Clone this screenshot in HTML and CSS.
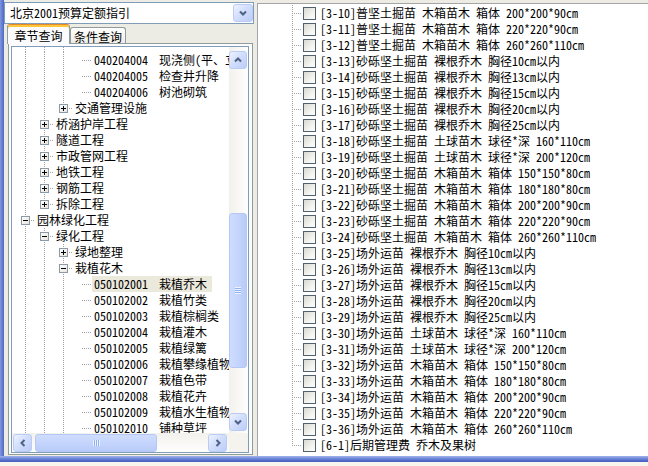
FILE: index.html
```html
<!DOCTYPE html>
<html lang="zh-CN">
<head>
<meta charset="utf-8">
<title>定额指引</title>
<link rel="stylesheet" href="styles.css">
</head>
<body>
<div class="screen">
  <div class="main">
    <div class="edge"></div>
    <div class="left">
      <div class="combo">
        <span class="combo-text">北京2001预算定额指引</span>
        <span class="sbtn combo-btn"><svg width="8" height="6" viewBox="0 0 8 6"><path d="M1 1.5l3 3 3-3" fill="none" stroke="#4d6185" stroke-width="2"/></svg></span>
      </div>
      <div class="tabs">
        <span class="tab active">章节查询</span>
        <span class="tab">条件查询</span>
      </div>
      <div class="tabpage">
        <div class="tree">
          <div class="tree-body">
            <div class="row part"><span class="c v"></span><span class="c v"></span><span class="c v"></span></div>
            <div class="row"><span class="c v"></span><span class="c v"></span><span class="c v"></span><span class="c h"></span><span class="lb"><span class="cd">040204004</span>现浇侧(平、立)石</span></div>
            <div class="row"><span class="c v"></span><span class="c v"></span><span class="c v"></span><span class="c h"></span><span class="lb"><span class="cd">040204005</span>检查井升降</span></div>
            <div class="row"><span class="c v"></span><span class="c v"></span><span class="c v"></span><span class="c h"></span><span class="lb"><span class="cd">040204006</span>树池砌筑</span></div>
            <div class="row"><span class="c v"></span><span class="c v"></span><span class="c e"><i class="bx p"></i></span><span class="lb">交通管理设施</span></div>
            <div class="row"><span class="c v"></span><span class="c t"><i class="bx p"></i></span><span class="lb">桥涵护岸工程</span></div>
            <div class="row"><span class="c v"></span><span class="c t"><i class="bx p"></i></span><span class="lb">隧道工程</span></div>
            <div class="row"><span class="c v"></span><span class="c t"><i class="bx p"></i></span><span class="lb">市政管网工程</span></div>
            <div class="row"><span class="c v"></span><span class="c t"><i class="bx p"></i></span><span class="lb">地铁工程</span></div>
            <div class="row"><span class="c v"></span><span class="c t"><i class="bx p"></i></span><span class="lb">钢筋工程</span></div>
            <div class="row"><span class="c v"></span><span class="c e"><i class="bx p"></i></span><span class="lb">拆除工程</span></div>
            <div class="row"><span class="c t"><i class="bx m"></i></span><span class="lb">园林绿化工程</span></div>
            <div class="row"><span class="c v"></span><span class="c t"><i class="bx m"></i></span><span class="lb">绿化工程</span></div>
            <div class="row"><span class="c v"></span><span class="c v"></span><span class="c t"><i class="bx p"></i></span><span class="lb">绿地整理</span></div>
            <div class="row"><span class="c v"></span><span class="c v"></span><span class="c t"><i class="bx m"></i></span><span class="lb">栽植花木</span></div>
            <div class="row"><span class="c v"></span><span class="c v"></span><span class="c v"></span><span class="c h"></span><span class="lb sel"><span class="cd">050102001</span>栽植乔木</span></div>
            <div class="row"><span class="c v"></span><span class="c v"></span><span class="c v"></span><span class="c h"></span><span class="lb"><span class="cd">050102002</span>栽植竹类</span></div>
            <div class="row"><span class="c v"></span><span class="c v"></span><span class="c v"></span><span class="c h"></span><span class="lb"><span class="cd">050102003</span>栽植棕榈类</span></div>
            <div class="row"><span class="c v"></span><span class="c v"></span><span class="c v"></span><span class="c h"></span><span class="lb"><span class="cd">050102004</span>栽植灌木</span></div>
            <div class="row"><span class="c v"></span><span class="c v"></span><span class="c v"></span><span class="c h"></span><span class="lb"><span class="cd">050102005</span>栽植绿篱</span></div>
            <div class="row"><span class="c v"></span><span class="c v"></span><span class="c v"></span><span class="c h"></span><span class="lb"><span class="cd">050102006</span>栽植攀缘植物</span></div>
            <div class="row"><span class="c v"></span><span class="c v"></span><span class="c v"></span><span class="c h"></span><span class="lb"><span class="cd">050102007</span>栽植色带</span></div>
            <div class="row"><span class="c v"></span><span class="c v"></span><span class="c v"></span><span class="c h"></span><span class="lb"><span class="cd">050102008</span>栽植花卉</span></div>
            <div class="row"><span class="c v"></span><span class="c v"></span><span class="c v"></span><span class="c h"></span><span class="lb"><span class="cd">050102009</span>栽植水生植物</span></div>
            <div class="row"><span class="c v"></span><span class="c v"></span><span class="c v"></span><span class="c h"></span><span class="lb"><span class="cd">050102010</span>铺种草坪</span></div>
            <div class="row"><span class="c v"></span><span class="c v"></span><span class="c v"></span><span class="c h"></span><span class="lb"><span class="cd">050102011</span>喷播植草</span></div>
          </div>
          <div class="vscroll">
            <span class="sbtn vbtn"><svg width="8" height="6" viewBox="0 0 8 6"><path d="M1 4.5l3-3 3 3" fill="none" stroke="#4d6185" stroke-width="2"/></svg></span>
            <div class="vtrack"><span class="thumb vthumb"><i class="vgrip"></i></span></div>
            <span class="sbtn vbtn"><svg width="8" height="6" viewBox="0 0 8 6"><path d="M1 1.5l3 3 3-3" fill="none" stroke="#4d6185" stroke-width="2"/></svg></span>
          </div>
          <div class="hscroll">
            <span class="sbtn hbtn hleft"><svg width="6" height="8" viewBox="0 0 6 8"><path d="M4.5 1l-3 3 3 3" fill="none" stroke="#4d6185" stroke-width="2"/></svg></span>
            <span class="thumb hthumb"><i class="hgrip"></i></span>
            <span class="hspace"></span>
            <span class="sbtn hbtn hright"><svg width="6" height="8" viewBox="0 0 6 8"><path d="M1.5 1l3 3-3 3" fill="none" stroke="#4d6185" stroke-width="2"/></svg></span>
          </div>
          <div class="corner"></div>
        </div>
      </div>
    </div>
    <div class="gap"></div>
    <div class="right">
      <div class="list">
        <div class="rrow"><span class="c t"></span><span class="cb"></span>[3-10]普坚土掘苗 木箱苗木 箱体 200*200*90cm</div>
        <div class="rrow"><span class="c t"></span><span class="cb"></span>[3-11]普坚土掘苗 木箱苗木 箱体 220*220*90cm</div>
        <div class="rrow"><span class="c t"></span><span class="cb"></span>[3-12]普坚土掘苗 木箱苗木 箱体 260*260*110cm</div>
        <div class="rrow"><span class="c t"></span><span class="cb"></span>[3-13]砂砾坚土掘苗 裸根乔木 胸径10cm以内</div>
        <div class="rrow"><span class="c t"></span><span class="cb"></span>[3-14]砂砾坚土掘苗 裸根乔木 胸径13cm以内</div>
        <div class="rrow"><span class="c t"></span><span class="cb"></span>[3-15]砂砾坚土掘苗 裸根乔木 胸径15cm以内</div>
        <div class="rrow"><span class="c t"></span><span class="cb"></span>[3-16]砂砾坚土掘苗 裸根乔木 胸径20cm以内</div>
        <div class="rrow"><span class="c t"></span><span class="cb"></span>[3-17]砂砾坚土掘苗 裸根乔木 胸径25cm以内</div>
        <div class="rrow"><span class="c t"></span><span class="cb"></span>[3-18]砂砾坚土掘苗 土球苗木 球径*深 160*110cm</div>
        <div class="rrow"><span class="c t"></span><span class="cb"></span>[3-19]砂砾坚土掘苗 土球苗木 球径*深 200*120cm</div>
        <div class="rrow"><span class="c t"></span><span class="cb"></span>[3-20]砂砾坚土掘苗 木箱苗木 箱体 150*150*80cm</div>
        <div class="rrow"><span class="c t"></span><span class="cb"></span>[3-21]砂砾坚土掘苗 木箱苗木 箱体 180*180*80cm</div>
        <div class="rrow"><span class="c t"></span><span class="cb"></span>[3-22]砂砾坚土掘苗 木箱苗木 箱体 200*200*90cm</div>
        <div class="rrow"><span class="c t"></span><span class="cb"></span>[3-23]砂砾坚土掘苗 木箱苗木 箱体 220*220*90cm</div>
        <div class="rrow"><span class="c t"></span><span class="cb"></span>[3-24]砂砾坚土掘苗 木箱苗木 箱体 260*260*110cm</div>
        <div class="rrow"><span class="c t"></span><span class="cb"></span>[3-25]场外运苗 裸根乔木 胸径10cm以内</div>
        <div class="rrow"><span class="c t"></span><span class="cb"></span>[3-26]场外运苗 裸根乔木 胸径13cm以内</div>
        <div class="rrow"><span class="c t"></span><span class="cb"></span>[3-27]场外运苗 裸根乔木 胸径15cm以内</div>
        <div class="rrow"><span class="c t"></span><span class="cb"></span>[3-28]场外运苗 裸根乔木 胸径20cm以内</div>
        <div class="rrow"><span class="c t"></span><span class="cb"></span>[3-29]场外运苗 裸根乔木 胸径25cm以内</div>
        <div class="rrow"><span class="c t"></span><span class="cb"></span>[3-30]场外运苗 土球苗木 球径*深 160*110cm</div>
        <div class="rrow"><span class="c t"></span><span class="cb"></span>[3-31]场外运苗 土球苗木 球径*深 200*120cm</div>
        <div class="rrow"><span class="c t"></span><span class="cb"></span>[3-32]场外运苗 木箱苗木 箱体 150*150*80cm</div>
        <div class="rrow"><span class="c t"></span><span class="cb"></span>[3-33]场外运苗 木箱苗木 箱体 180*180*80cm</div>
        <div class="rrow"><span class="c t"></span><span class="cb"></span>[3-34]场外运苗 木箱苗木 箱体 200*200*90cm</div>
        <div class="rrow"><span class="c t"></span><span class="cb"></span>[3-35]场外运苗 木箱苗木 箱体 220*220*90cm</div>
        <div class="rrow"><span class="c t"></span><span class="cb"></span>[3-36]场外运苗 木箱苗木 箱体 260*260*110cm</div>
        <div class="rrow"><span class="c e"></span><span class="cb"></span>[6-1]后期管理费 乔木及果树</div>
      </div>
    </div>
  </div>
  <div class="bluebar"></div>
  <div class="under"></div>
</div>
</body>
</html>
```

FILE: styles.css
```css
html, body {
  margin: 0;
  padding: 0;
}
body {
  width: 648px;
  height: 466px;
  overflow: hidden;
  background: #f4f3ee;
  font-family: "Noto Sans Mono CJK SC", "Noto Sans CJK SC", sans-serif;
  font-size: 12px;
  color: #000;
}
.screen {
  display: flex;
  flex-direction: column;
  width: 648px;
  height: 466px;
}
.main {
  display: flex;
  height: 456px;
  flex: none;
  background: #ecebe4;
}
.edge {
  width: 4px;
  flex: none;
  background: linear-gradient(to right, #8197dd, #4d68c6);
}
.left {
  width: 250px;
  flex: none;
  display: flex;
  flex-direction: column;
  padding-top: 2px;
  box-sizing: border-box;
}
.combo {
  height: 22px;
  box-sizing: border-box;
  border: 1px solid #7f9db9;
  background: #fff;
  display: flex;
  align-items: center;
  justify-content: space-between;
  flex: none;
}
.combo-text {
  padding-left: 5px;
  line-height: 16px;
  white-space: nowrap;
}
.sbtn {
  display: flex;
  align-items: center;
  justify-content: center;
  box-sizing: border-box;
  border: 1px solid #b9cbf6;
  border-radius: 3px;
  background: linear-gradient(135deg, #eef3ff 0%, #d2defc 45%, #bccdf8 100%);
  flex: none;
}
.combo-btn {
  width: 20px;
  height: 18px;
}
.tabs {
  display: flex;
  align-items: flex-end;
  height: 20px;
  padding-left: 3px;
  flex: none;
}
.tab {
  box-sizing: border-box;
  border: 1px solid #919b9c;
  border-bottom: none;
  border-radius: 3px 3px 0 0;
  height: 17px;
  width: 56px;
  text-align: center;
  line-height: 15px;
  padding-top: 1px;
  background: linear-gradient(#ffffff, #ecebe6);
  white-space: nowrap;
}
.tab.active {
  position: relative;
  z-index: 1;
  width: 63px;
  height: 20px;
  padding-top: 3px;
  border-top: 1px solid #e68b2c;
  box-shadow: inset 0 2px 0 #ffc83c;
  background: #fcfcfe;
}
.tabpage {
  margin: -1px 1px 0 4px;
  height: 412px;
  box-sizing: border-box;
  border: 1px solid #919b9c;
  padding: 2px 3px 1px 2px;
  background: #fcfcfe;
  flex: none;
}
.tree {
  border: 1px solid #7f9db9;
  display: grid;
  grid-template-columns: 217px 19px;
  grid-template-rows: 386px 19px;
  background: #fff;
}
.tree-body {
  overflow: hidden;
  padding-left: 4px;
  background: #fff;
}
.row {
  display: flex;
  align-items: center;
  height: 16px;
  white-space: nowrap;
}
.row.part {
  height: 5px;
}
.c {
  width: 19px;
  height: 100%;
  flex: none;
  display: flex;
  align-items: center;
  justify-content: center;
  background-repeat: no-repeat;
}
.v {
  background-image: repeating-linear-gradient(to bottom, #a0a0a0 0 1px, transparent 1px 2px);
  background-size: 1px 100%;
  background-position: 9px 0;
}
.t {
  background-image: repeating-linear-gradient(to bottom, #a0a0a0 0 1px, transparent 1px 2px),
    repeating-linear-gradient(to right, #a0a0a0 0 1px, transparent 1px 2px);
  background-size: 1px 100%, 9px 1px;
  background-position: 9px 0, 11px 8px;
}
.e {
  background-image: repeating-linear-gradient(to bottom, #a0a0a0 0 1px, transparent 1px 2px),
    repeating-linear-gradient(to right, #a0a0a0 0 1px, transparent 1px 2px);
  background-size: 1px 9px, 9px 1px;
  background-position: 9px 0, 11px 8px;
}
.h {
  background-image: repeating-linear-gradient(to right, #a0a0a0 0 1px, transparent 1px 2px);
  background-size: 9px 1px;
  background-position: 9px 8px;
}
.bx {
  width: 9px;
  height: 9px;
  box-sizing: border-box;
  border: 1px solid #8d9aa6;
  display: block;
  margin-top: 1px;
}
.bx.p {
  background:
    linear-gradient(#000, #000) center / 5px 1px no-repeat,
    linear-gradient(#000, #000) center / 1px 5px no-repeat,
    linear-gradient(135deg, #ffffff 0%, #e6e4dc 100%);
}
.bx.m {
  background:
    linear-gradient(#000, #000) center / 5px 1px no-repeat,
    linear-gradient(135deg, #ffffff 0%, #e6e4dc 100%);
}
.lb {
  display: flex;
  height: 16px;
  line-height: 16px;
  padding: 0 5px 0 2px;
  white-space: nowrap;
}
.lb.sel {
  background: #ebe8dc;
}
.cd {
  display: inline-block;
  width: 65px;
  flex: none;
}
.vscroll {
  display: flex;
  flex-direction: column;
  padding: 4px 1px 2px 0;
  background: linear-gradient(to right, #f3f1ec, #fefefe);
}
.vbtn {
  width: 18px;
  height: 18px;
}
.vtrack {
  flex: 1;
}
.thumb {
  display: flex;
  align-items: center;
  justify-content: center;
  box-sizing: border-box;
  border: 1px solid #b5c8f5;
  border-radius: 3px;
  background: linear-gradient(to right, #cedcfd, #c2d3fc 60%, #b8cbf7);
}
.vthumb {
  margin-top: 144px;
  height: 155px;
  width: 18px;
}
.vgrip {
  display: block;
  width: 6px;
  height: 7px;
  background: repeating-linear-gradient(to bottom, #eef3fe 0 1px, #8fb1f5 1px 2px);
}
.hscroll {
  display: flex;
  align-items: center;
  background: linear-gradient(#f3f1ec, #fefefe);
}
.hbtn {
  width: 19px;
  height: 18px;
}
.hleft {
  margin-left: 1px;
}
.hthumb {
  margin-left: 3px;
  width: 122px;
  height: 18px;
  background: linear-gradient(#cedcfd, #c2d3fc 60%, #b8cbf7);
}
.hgrip {
  display: block;
  width: 7px;
  height: 6px;
  background: repeating-linear-gradient(to right, #eef3fe 0 1px, #8fb1f5 1px 2px);
}
.hspace {
  flex: 1;
}
.hright {
  margin-right: 2px;
}
.corner {
  background: #f4f3ee;
}
.gap {
  width: 3px;
  flex: none;
}
.right {
  flex: 1;
  min-width: 0;
  margin-top: 3px;
  border-left: 1px solid #a5a5a5;
  border-top: 1px solid #a5a5a5;
  background: #fff;
  overflow: hidden;
}
.list {
  padding: 1px 0 0 25px;
}
.rrow {
  display: flex;
  align-items: center;
  height: 16px;
  line-height: 16px;
  white-space: nowrap;
}
.cb {
  width: 13px;
  height: 13px;
  box-sizing: border-box;
  border: 1px solid #51606e;
  background: linear-gradient(135deg, #d9d9d2 0%, #f3f3ef 60%, #ffffff 100%);
  margin: 0 4px 0 1px;
  flex: none;
}
.bluebar {
  height: 6px;
  flex: none;
  background: linear-gradient(#a3b4ec, #6781d6 50%, #3f5bbd);
}
.under {
  flex: 1;
  background: #f6f5ee;
}
```
